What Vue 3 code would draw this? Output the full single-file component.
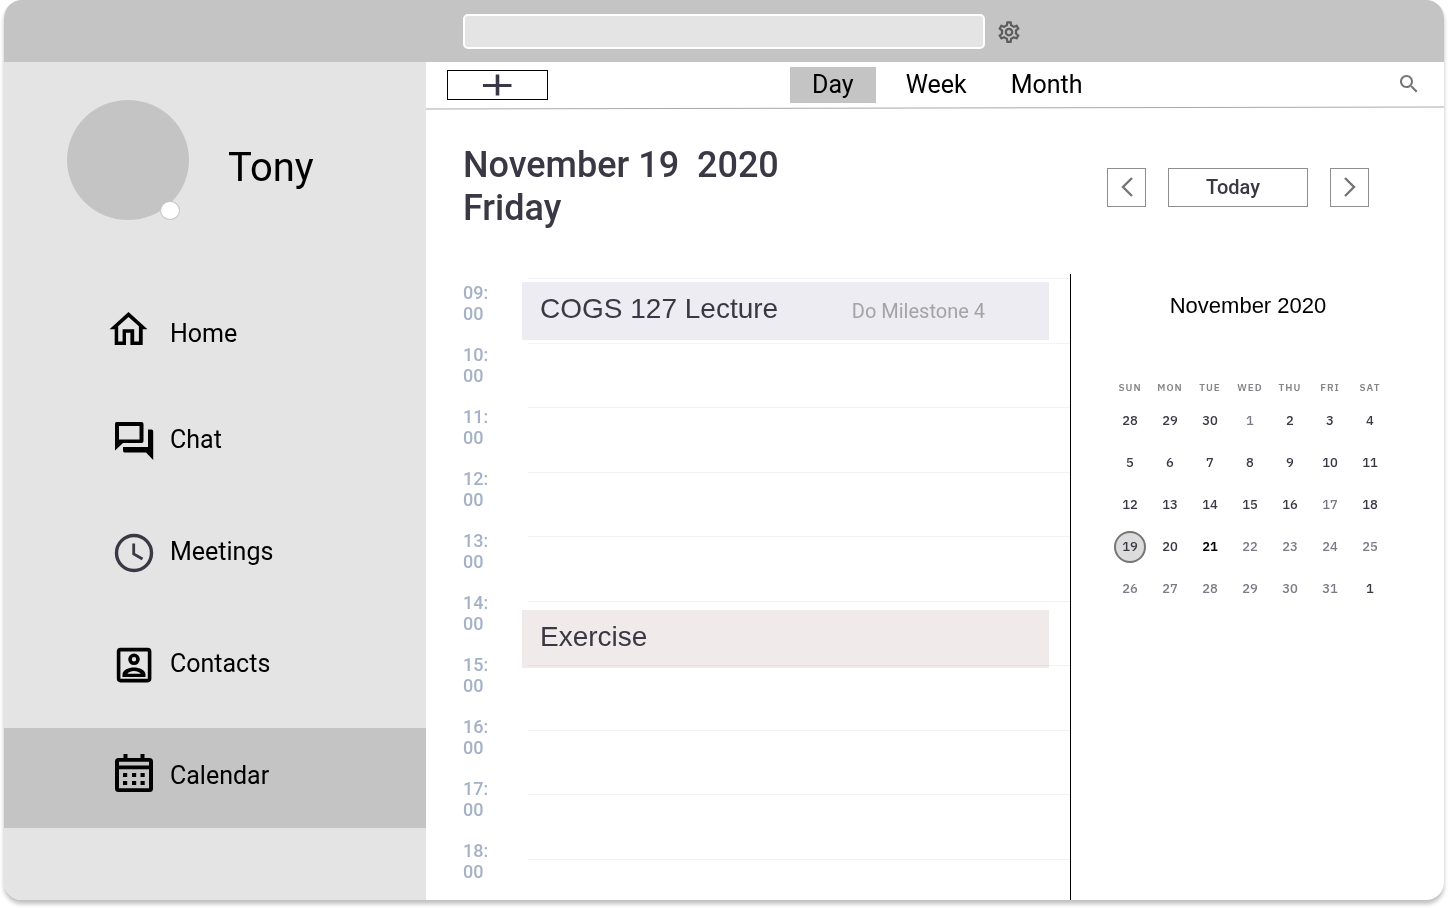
<script setup>
import { ref } from 'vue'

const query = ref('')
const section = ref('Calendar')
const view = ref('Day')
const selected = ref(21)

const sections = ['Home', 'Chat', 'Meetings', 'Contacts', 'Calendar']
const views = ['Day', 'Week', 'Month']
const hours = ['09', '10', '11', '12', '13', '14', '15', '16', '17', '18']

const weekdays = ['SUN', 'MON', 'TUE', 'WED', 'THU', 'FRI', 'SAT']
const numbers = [28, 29, 30, ...Array.from({ length: 31 }, (_, i) => i + 1), 1]
const muted = [3, 19, 24, 25, 26, 27, 28, 29, 30, 31, 32, 33]
const days = numbers.map((number, index) => ({
  index,
  number,
  muted: muted.includes(index)
}))
const weeks = [0, 1, 2, 3, 4].map((w) => days.slice(w * 7, w * 7 + 7))
</script>

<template>
  <div class="window">
    <header class="topbar">
      <input v-model="query" class="address" type="text" aria-label="Search or enter address" />
      <button class="icon-button settings" type="button" aria-label="Settings">
        <svg width="26" height="26" viewBox="0 -1 24 24" fill="#5c5c5c">
          <path d="M19.43 12.98c.04-.32.07-.64.07-.98 0-.34-.03-.66-.07-.98l2.11-1.65c.19-.15.24-.42.12-.64l-2-3.46c-.09-.16-.26-.25-.44-.25-.06 0-.12.01-.17.03l-2.49 1c-.52-.4-1.08-.73-1.69-.98l-.38-2.65C14.46 2.18 14.25 2 14 2h-4c-.25 0-.46.18-.49.42l-.38 2.65c-.61.25-1.17.59-1.69.98l-2.49-1c-.06-.02-.12-.03-.18-.03-.17 0-.34.09-.43.25l-2 3.46c-.13.22-.07.49.12.64l2.11 1.65c-.04.32-.07.65-.07.98 0 .33.03.66.07.98l-2.11 1.65c-.19.15-.24.42-.12.64l2 3.46c.09.16.26.25.44.25.06 0 .12-.01.17-.03l2.49-1c.52.4 1.08.73 1.69.98l.38 2.65c.03.24.24.42.49.42h4c.25 0 .46-.18.49-.42l.38-2.65c.61-.25 1.17-.59 1.69-.98l2.49 1c.06.02.12.03.18.03.17 0 .34-.09.43-.25l2-3.46c.12-.22.07-.49-.12-.64l-2.11-1.65zm-1.98-1.71c.04.31.05.52.05.73 0 .21-.02.43-.05.73l-.14 1.13.89.7 1.08.84-.7 1.21-1.27-.51-1.04-.42-.9.68c-.43.32-.84.56-1.25.73l-1.06.43-.16 1.13-.2 1.35h-1.4l-.19-1.35-.16-1.13-1.06-.43c-.43-.18-.83-.41-1.23-.71l-.91-.7-1.06.43-1.27.51-.7-1.21 1.08-.84.89-.7-.14-1.13c-.03-.31-.05-.54-.05-.74s.02-.43.05-.73l.14-1.13-.89-.7-1.08-.84.7-1.21 1.27.51 1.04.42.9-.68c.43-.32.84-.56 1.25-.73l1.06-.43.16-1.13.2-1.35h1.39l.19 1.35.16 1.13 1.06.43c.43.18.83.41 1.23.71l.91.7 1.06-.43 1.27-.51.7 1.21-1.07.85-.89.7.14 1.13zM12 8c-2.21 0-4 1.79-4 4s1.79 4 4 4 4-1.79 4-4-1.79-4-4-4zm0 6c-1.1 0-2-.9-2-2s.9-2 2-2 2 .9 2 2-.9 2-2 2z" />
        </svg>
      </button>
    </header>

    <div class="body">
      <aside class="sidebar">
        <div class="profile">
          <div class="avatar"><span class="status"></span></div>
          <span class="name">Tony</span>
        </div>
        <nav class="nav" aria-label="Sections">
          <a
            v-for="item in sections"
            :key="item"
            href="#"
            class="nav-link"
            :class="{ active: section === item }"
            @click.prevent="section = item"
          >
            <svg class="nav-icon" viewBox="0 1 46 46" aria-hidden="true">
              <path
                v-if="item === 'Home'"
                fill-rule="evenodd"
                d="M18.500 2 L37.500 19.300 H32.700 V35 H20.400 V22.700 H16 V35 H4.700 V19.300 H-0.500 Z M18.500 7 L8.200 16.200 V31.500 H12.600 V19.200 H24.200 V31.500 H28.900 V16.200 Z"
              />
              <g v-else-if="item === 'Chat'">
                <path
                  fill-rule="evenodd"
                  d="M6.500 6 H31.500 Q33.500 6 33.500 8 V25 Q33.500 27 31.500 27 H13 L5 34.500 V8 Q5 6 6.500 6 Z M9 10 V23.500 H29.500 V10 Z"
                />
                <path d="M38 13.500 H41.500 Q43.200 13.500 43.200 15.500 V44 L36 36.500 H14.500 Q13 36.500 13 34.500 V31 H38 Z" />
              </g>
              <g v-else-if="item === 'Meetings'" fill="none" stroke="#3a3844">
                <circle cx="24" cy="25" r="17.500" stroke-width="3.400" />
                <path d="M23.700 15.500 V26 L32.500 31" stroke-width="2.800" />
              </g>
              <g v-else-if="item === 'Contacts'" fill="none" stroke="#000">
                <rect x="8.600" y="9.600" width="31" height="31" rx="2" stroke-width="3.600" />
                <circle cx="24" cy="19.300" r="4" stroke-width="3.600" />
                <path
                  fill="#000"
                  stroke="none"
                  fill-rule="evenodd"
                  d="M12.500 37 V34.500 C12.500 30 18.800 27.500 24 27.500 S35.500 30 35.500 34.500 V37 Z M17.300 33.700 H30.800 C29.300 32 26.800 31 24 31 S18.800 32 17.300 33.700 Z"
                />
              </g>
              <g v-else>
                <path
                  fill-rule="evenodd"
                  d="M13.500 2 H17.500 V6 H30.500 V2 H34.500 V6 H39.500 Q43 6 43 9.500 V36.500 Q43 40 39.500 40 H8.500 Q5 40 5 36.500 V9.500 Q5 6 8.500 6 H13.500 Z M9 9.800 V13.400 H39 V9.800 Z M9 17.200 V36.300 H39 V17.200 Z"
                />
                <path d="M13 21h4.200v4h-4.200z M22 21h4.200v4h-4.200z M30.500 21h4.200v4h-4.200z M13 29h4.200v4h-4.200z M22 29h4.200v4h-4.200z M30.500 29h4.200v4h-4.200z" />
              </g>
            </svg>
            <span>{{ item }}</span>
          </a>
        </nav>
      </aside>

      <main class="main">
        <div class="toolbar">
          <button class="add" type="button" aria-label="Add event">
            <svg width="30" height="22" viewBox="1 0 30 22" stroke="#3a3844" fill="none">
              <path d="M1 11.500 H29.500" stroke-width="3" />
              <path d="M15.500 0.500 V21.500" stroke-width="3.600" />
            </svg>
          </button>
          <div class="tabs">
            <button
              v-for="item in views"
              :key="item"
              type="button"
              class="tab"
              :class="{ active: view === item }"
              :aria-pressed="view === item"
              @click="view = item"
            >{{ item }}</button>
          </div>
          <button class="icon-button search" type="button" aria-label="Search">
            <svg width="24" height="24" viewBox="0 1 24 24" fill="#757575">
              <path d="M15.500 14h-.79l-.28-.27C15.410 12.590 16 11.110 16 9.500 16 5.910 13.090 3 9.500 3S3 5.910 3 9.500 5.910 16 9.500 16c1.610 0 3.090-.59 4.230-1.570l.27.28v.79l5 4.990L20.490 19l-4.990-5zm-6 0C7.010 14 5 11.990 5 9.500S7.010 5 9.500 5 14 7.010 14 9.500 11.990 14 9.500 14z" />
            </svg>
          </button>
        </div>
        <svg class="rule" viewBox="0 0 1018 4" preserveAspectRatio="none" aria-hidden="true">
          <path d="M0 3 L1018 1" stroke="#a9a9a9" stroke-width="1" />
        </svg>

        <div class="heading">
          <h1 class="date">November 19&nbsp; 2020<br />Friday</h1>
          <div class="pager">
            <button class="step" type="button" aria-label="Previous day">
              <svg width="12" height="20" viewBox="0 0 12 20"><path d="M11 1 L2 10 L11 19" /></svg>
            </button>
            <button class="today" type="button">Today</button>
            <button class="step" type="button" aria-label="Next day">
              <svg width="12" height="20" viewBox="0 0 12 20"><path d="M1 1 L10 10 L1 19" /></svg>
            </button>
          </div>
        </div>

        <div class="content">
          <section class="schedule" aria-label="Schedule">
            <div class="hours">
              <span v-for="hour in hours" :key="hour" class="hour">{{ hour }}:<wbr />00</span>
            </div>
            <div class="track">
              <div class="lines">
                <div v-for="hour in hours" :key="hour" class="line"></div>
              </div>
              <article class="event lecture">
                <span class="event-title">COGS 127 Lecture</span>
                <span class="event-note">Do Milestone 4</span>
              </article>
              <article class="event exercise">
                <span class="event-title">Exercise</span>
              </article>
            </div>
          </section>

          <section class="month">
            <h2 id="month-title" class="month-title">November 2020</h2>
            <table class="calendar" aria-labelledby="month-title">
              <thead>
                <tr>
                  <th v-for="day in weekdays" :key="day" scope="col">{{ day }}</th>
                </tr>
              </thead>
              <tbody>
                <tr v-for="(week, w) in weeks" :key="w">
                  <td v-for="day in week" :key="day.index">
                    <button
                      type="button"
                      class="day"
                      :class="{ muted: day.muted, current: day.index === selected, strong: day.index === 23 }"
                      @click="selected = day.index"
                    >{{ day.number }}</button>
                  </td>
                </tr>
              </tbody>
            </table>
          </section>
        </div>
      </main>
    </div>
  </div>
</template>

<style>
body {
  margin: 0;
  background: #fff;
}
</style>

<style scoped>
.window,
.window * {
  box-sizing: border-box;
}

.window {
  display: flex;
  flex-direction: column;
  min-height: calc(100vh - 8px);
  margin: 0 4px 8px;
  overflow: hidden;
  border-radius: 18px;
  background: #fff;
  box-shadow: 0 4px 4px rgba(0, 0, 0, 0.25);
  font-family: Roboto, "Liberation Sans", sans-serif;
  color: #000;
}

button {
  padding: 0;
  border: 0;
  background: none;
  color: inherit;
  font: inherit;
  cursor: pointer;
}

svg {
  display: block;
}

.topbar {
  display: grid;
  grid-template-columns: 1fr 522px 1fr;
  align-items: center;
  height: 62px;
  background: #c4c4c4;
}

.address {
  grid-column: 2;
  height: 35px;
  padding: 0 12px;
  border: 2px solid #fff;
  border-radius: 5px;
  background: #e4e4e4;
  font: inherit;
  font-size: 18px;
}

.settings {
  justify-self: start;
  margin-left: 11px;
}

.body {
  display: flex;
  flex: 1;
}

.sidebar {
  flex: none;
  width: 422px;
  background: #e4e4e4;
}

.profile {
  display: flex;
  align-items: center;
  gap: 39px;
  padding: 38px 0 0 63px;
}

.avatar {
  position: relative;
  width: 122px;
  height: 120px;
  border-radius: 50%;
  background: #c4c4c4;
}

.status {
  position: absolute;
  right: 9px;
  bottom: 0;
  width: 20px;
  height: 19px;
  border: 1px solid #c4c4c4;
  border-radius: 50%;
  background: #fff;
}

.name {
  padding-top: 14px;
  font-size: 40px;
  line-height: 47px;
}

.nav {
  display: flex;
  flex-direction: column;
  gap: 12px;
  margin-top: 72px;
}

.nav-link {
  display: flex;
  align-items: center;
  gap: 14px;
  height: 100px;
  padding: 0 0 4px 106px;
  color: #000;
  font-size: 25px;
  line-height: 30px;
  text-decoration: none;
}

.nav-link:first-child {
  height: 88px;
}

.nav-link.active {
  background: #c4c4c4;
}

.nav-icon {
  width: 46px;
  height: 46px;
  overflow: visible;
}

.main {
  display: flex;
  flex: 1;
  flex-direction: column;
  min-width: 0;
}

.toolbar {
  display: flex;
  align-items: center;
  height: 44px;
  padding: 2px 23px 0 21px;
}

.add {
  display: flex;
  align-items: center;
  justify-content: center;
  width: 101px;
  height: 30px;
  border: 1px solid #000;
}

.tabs {
  display: flex;
  margin-left: 242px;
}

.tab {
  height: 36px;
  padding: 0 22px;
  font-size: 25px;
  line-height: 36px;
}

.tab.active {
  margin-right: 8px;
  background: #c4c4c4;
}

.search {
  margin-left: auto;
}

.rule {
  width: 100%;
  height: 4px;
}

.heading {
  display: flex;
  align-items: center;
  justify-content: space-between;
  padding: 34px 75px 44px 37px;
}

.date {
  margin: 0;
  color: #3a3844;
  font-size: 36px;
  font-weight: 500;
  line-height: 43px;
}

.pager {
  display: flex;
  gap: 22px;
}

.step,
.today {
  display: flex;
  align-items: center;
  justify-content: center;
  height: 39px;
  border: 1px solid #8e8e8e;
}

.step {
  width: 39px;
}

.step path {
  fill: none;
  stroke: #757575;
  stroke-width: 2.4;
}

.today {
  width: 140px;
  padding-right: 10px;
  color: #3a3844;
  font-size: 20px;
  font-weight: 500;
}

.content {
  display: flex;
  flex: 1;
}

.schedule {
  display: grid;
  flex: 1;
  grid-template-columns: 59px 1fr;
  min-width: 0;
  padding-left: 37px;
}

.hours {
  display: flex;
  flex-direction: column;
  gap: 20px;
  width: 30px;
  padding-top: 8px;
}

.hour {
  color: #a5b1c7;
  font-size: 18px;
  font-weight: 500;
  line-height: 21px;
}

.track {
  position: relative;
  padding-top: 4px;
}

.lines {
  display: grid;
  grid-template-rows: repeat(9, 1fr) 1px;
  height: 582px;
  margin-left: 6px;
}

.line {
  border-top: 1px solid #f2f2f2;
}

.event {
  position: absolute;
  right: 21px;
  left: 0;
  display: flex;
  align-items: baseline;
  height: 58px;
  padding: 10px 64px 0 18px;
  mix-blend-mode: multiply;
}

.lecture {
  top: 8px;
  background: #edecf2;
}

.exercise {
  top: 336px;
  background: #f0eaea;
}

.event-title {
  color: #3a3844;
  font-family: "Liberation Sans", Arial, sans-serif;
  font-size: 28px;
  line-height: 34px;
}

.event-note {
  margin-left: auto;
  color: #a5a3a3;
  font-size: 20px;
}

.month {
  flex: none;
  width: 374px;
  padding: 19px 54px 0 39px;
  border-left: 1px solid #000;
}

.month-title {
  margin: 0;
  padding-right: 4px;
  font-family: "Liberation Sans", Arial, sans-serif;
  font-size: 22px;
  font-weight: 400;
  line-height: 26px;
  text-align: center;
}

.calendar {
  width: 280px;
  margin-top: 56px;
  border-spacing: 0;
  table-layout: fixed;
}

.calendar th {
  height: 25px;
  padding: 0;
  color: #86868a;
  font-family: "IBM Plex Sans", "DejaVu Sans", sans-serif;
  font-size: 10px;
  font-weight: 600;
  letter-spacing: 1px;
}

.calendar td {
  height: 42px;
  padding: 0;
  text-align: center;
}

.day {
  width: 32px;
  height: 32px;
  border-radius: 50%;
  color: #3a3844;
  font-family: "IBM Plex Sans", "DejaVu Sans", sans-serif;
  font-size: 13px;
  font-weight: 500;
  line-height: 28px;
}

.day.muted {
  color: #7d7a88;
}

.day.strong {
  color: #000;
  font-weight: 600;
}

.day.current {
  border: 2px solid #757575;
  background: #dcdcdc;
}
</style>
